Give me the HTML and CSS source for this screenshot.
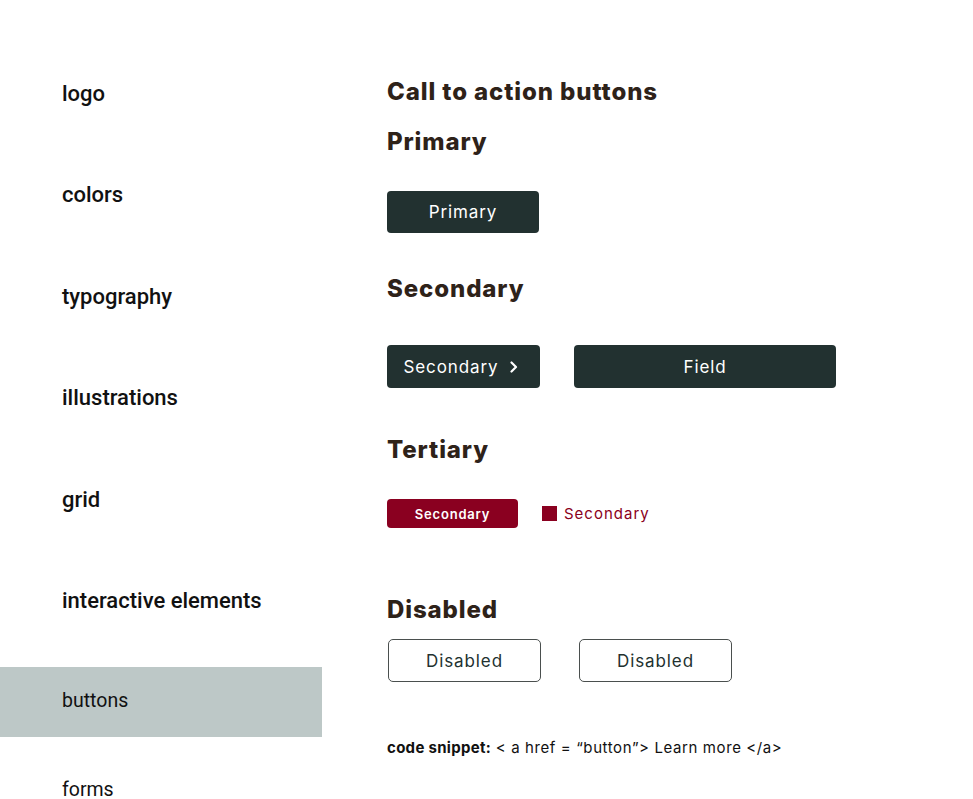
FILE: index.html
```html
<!DOCTYPE html>
<html lang="en">
<head>
<meta charset="utf-8">
<title>Buttons</title>
<link rel="stylesheet" href="styles.css">
</head>
<body>
<div class="page">
  <nav class="sidebar">
    <div class="nav-item">logo</div>
    <div class="nav-item">colors</div>
    <div class="nav-item">typography</div>
    <div class="nav-item">illustrations</div>
    <div class="nav-item">grid</div>
    <div class="nav-item">interactive elements</div>
    <div class="nav-item active">buttons</div>
    <div class="nav-item last">forms</div>
  </nav>
  <main class="content">
    <h1 class="title">Call to action buttons</h1>
    <h2 class="heading h-primary">Primary</h2>
    <div class="row r-primary">
      <a class="btn btn-dark btn-primary">Primary</a>
    </div>
    <h2 class="heading h-secondary">Secondary</h2>
    <div class="row r-secondary">
      <a class="btn btn-dark btn-secondary">Secondary
        <svg class="chev" width="12" height="12" viewBox="0 0 12 12"><path d="M3.5 1.5 L8 6 L3.5 10.5" fill="none" stroke="#fff" stroke-width="2.2" stroke-linecap="round" stroke-linejoin="round"/></svg>
      </a>
      <a class="btn btn-dark btn-field">Field</a>
    </div>
    <h2 class="heading h-tertiary">Tertiary</h2>
    <div class="row r-tertiary">
      <a class="btn btn-red">Secondary</a>
      <span class="link-red"><span class="sq"></span>Secondary</span>
    </div>
    <h2 class="heading h-disabled">Disabled</h2>
    <div class="row r-disabled">
      <a class="btn btn-outline">Disabled</a>
      <a class="btn btn-outline">Disabled</a>
    </div>
    <p class="code"><b>code snippet:</b> &lt; a href = “button”&gt; Learn more &lt;/a&gt;</p>
  </main>
</div>
</body>
</html>
```

FILE: styles.css
```css
* { box-sizing: border-box; }
html, body { margin: 0; padding: 0; background: #fff; }
body { font-family: "Inter", "Open Sans", sans-serif; color: #2e2219; }

.page { display: flex; align-items: flex-start; }

.sidebar {
  width: 322px;
  flex: none;
  padding-top: 58px;
  display: flex;
  flex-direction: column;
  gap: 31.5px;
}
.nav-item {
  height: 70px;
  display: flex;
  align-items: center;
  padding-left: 62px;
  font-family: "Roboto", sans-serif;
  font-weight: 500;
  font-size: 22px;
  color: #111;
}
.nav-item.active { background: #bdc8c7; font-weight: 400; font-size: 19.5px; padding-bottom: 3px; }
.nav-item.last { font-weight: 400; font-size: 19.5px; height: 18px; line-height: 18px; margin-top: 12.5px; }

.content {
  padding-left: 65px;
  display: flex;
  flex-direction: column;
  align-items: flex-start;
}
.title, .heading {
  margin: 0;
  font-size: 24px;
  line-height: 32px;
  font-weight: 800;
  letter-spacing: 0.9px;
  color: #2e2219;
}
.title { margin-top: 76px; }
.h-primary { margin-top: 18px; }
.h-secondary { margin-top: 40px; }
.h-tertiary { margin-top: 46px; }
.h-disabled { margin-top: 66px; }

.row { display: flex; align-items: center; }
.r-primary { margin-top: 33px; }
.r-secondary { margin-top: 40px; gap: 34px; }
.r-tertiary { margin-top: 33px; gap: 24px; }
.r-disabled { margin-top: 13px; gap: 38px; padding-left: 1px; }

.btn {
  display: flex;
  align-items: center;
  justify-content: center;
  border-radius: 4px;
  font-size: 17px;
  letter-spacing: 0.9px;
  text-decoration: none;
}
.btn-dark { background: #223130; color: #fff; height: 43px; }
.btn-primary { width: 152px; height: 42px; }
.btn-secondary { width: 153px; gap: 9px; padding-right: 4px; }
.chev { display: block; }
.btn-field { width: 262px; }

.btn-red {
  background: #8a0020;
  color: #fff;
  width: 131px;
  height: 29px;
  font-size: 13px;
  font-weight: 600;
  letter-spacing: 0.8px;
  border-radius: 4px;
}
.link-red {
  display: flex;
  align-items: center;
  gap: 7px;
  color: #8a0020;
  font-size: 15px;
  letter-spacing: 1px;
}
.sq { width: 15px; height: 15px; background: #8a0020; display: block; }

.btn-outline {
  width: 153px;
  height: 43px;
  border: 1px solid #4a4f4e;
  border-radius: 5px;
  color: #223130;
  background: #fff;
}

.code {
  margin: 56px 0 0;
  font-size: 15px;
  line-height: 20px;
  letter-spacing: 0.6px;
  color: #111;
}
.code b { font-weight: 700; letter-spacing: 0.3px; }
```
